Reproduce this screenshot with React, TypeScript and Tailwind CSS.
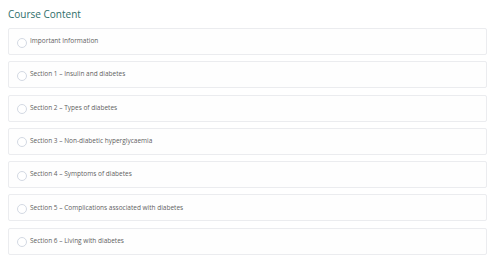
const SECTIONS = [
  "Important Information",
  "Section 1 – Insulin and diabetes",
  "Section 2 – Types of diabetes",
  "Section 3 – Non-diabetic hyperglycaemia",
  "Section 4 – Symptoms of diabetes",
  "Section 5 – Complications associated with diabetes",
  "Section 6 – Living with diabetes",
];

function SectionRow({ title }: { title: string }) {
  return (
    <div className="flex h-[27px] items-center rounded-[2px] border border-[#ebecef] bg-[#fefefe] pl-[8px]">
      <span className="mt-[2px] h-[10px] w-[10px] shrink-0 rounded-full border border-[#d3d9e3] bg-white" />
      <span className="ml-[3px] -mt-[1px] text-[6.5px] text-[#5f5f5f]">{title}</span>
    </div>
  );
}

export default function App() {
  return (
    <div className="h-[261px] w-[500px] bg-white px-[8px] pt-[7px] font-['Open_Sans',sans-serif]">
      <h2 className="text-[10px] font-medium leading-[14px] text-[#2e6e6a]">Course Content</h2>
      <div className="mt-[7px] mr-[5px] flex flex-col gap-[6.3px]">
        {SECTIONS.map((s) => (
          <SectionRow key={s} title={s} />
        ))}
      </div>
    </div>
  );
}
